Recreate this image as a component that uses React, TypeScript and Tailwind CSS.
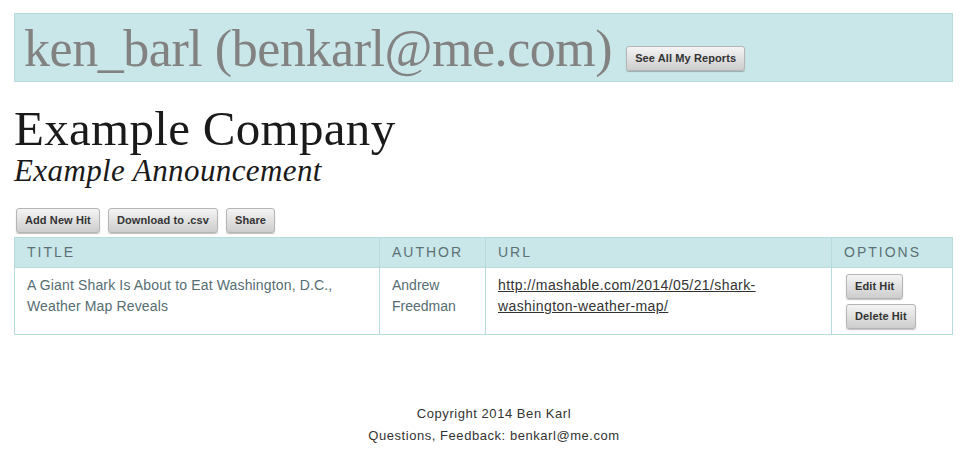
import React from "react";

const btn =
  "inline-flex items-center rounded-[3px] border border-[#b5b5b5] bg-gradient-to-b from-[#f4f4f4] to-[#cdcdcd] px-[8px] h-[25px] text-[11px] font-bold text-[#333] shadow-[0_1px_1px_rgba(0,0,0,0.25)] font-['Liberation_Sans',sans-serif] tracking-[0.1px]";

export default function App() {
  return (
    <div className="min-h-screen bg-white pl-[14px] pr-[19px] pt-[13px] font-['Liberation_Sans',Arial,sans-serif]">
      {/* user bar */}
      <div className="flex h-[69px] items-center border border-[#b8dcdd] bg-[#c9e7e9] pl-[9px]">
        <span className="font-['Liberation_Serif',serif] text-[52px] leading-none text-[#828282] tracking-[-0.45px] pt-[2px]">
          ken_barl (benkarl@me.com)
        </span>
        <button className={`${btn} ml-[14px] mt-[22px] px-[8px]`}>See All My Reports</button>
      </div>

      {/* company */}
      <h1 className="mt-[24px] font-['Liberation_Serif',serif] text-[49px] leading-[46px] text-[#1a1a1a] tracking-[0.3px]">
        Example Company
      </h1>
      <h2 className="mt-[2px] font-['Liberation_Serif',serif] italic text-[31px] leading-[34px] text-[#1a1a1a] tracking-[0.4px]">
        Example Announcement
      </h2>

      {/* actions */}
      <div className="mt-[20px] flex gap-[8px] pl-[2px]">
        <button className={btn}>Add New Hit</button>
        <button className={btn}>Download to .csv</button>
        <button className={btn}>Share</button>
      </div>

      {/* table */}
      <table className="mt-[4px] w-full border-collapse border border-[#b8dcdd] text-left">
        <thead>
          <tr className="h-[30px] bg-[#c9e7e9] text-[14px] tracking-[2px] text-[#5c7174]">
            <th className="w-[365px] border-r border-[#b8dcdd] px-[12px] font-normal">TITLE</th>
            <th className="w-[106px] border-r border-[#b8dcdd] px-[12px] font-normal">AUTHOR</th>
            <th className="w-[346px] border-r border-[#b8dcdd] px-[12px] font-normal">URL</th>
            <th className="px-[12px] font-normal">OPTIONS</th>
          </tr>
        </thead>
        <tbody>
          <tr className="h-[67px] border-t border-[#b8dcdd] align-top text-[14px] leading-[21px] text-[#566d72]">
            <td className="border-r border-[#b8dcdd] px-[12px] pt-[7px] tracking-[0.15px]">
              A Giant Shark Is About to Eat Washington, D.C., Weather Map Reveals
            </td>
            <td className="border-r border-[#b8dcdd] px-[12px] pt-[7px]">Andrew Freedman</td>
            <td className="border-r border-[#b8dcdd] px-[12px] pt-[7px] tracking-[0.4px]">
              <a className="text-[#333] underline">http://mashable.com/2014/05/21/shark-washington-weather-map/</a>
            </td>
            <td className="px-[14px] pt-[6px]">
              <div className="flex flex-col items-start gap-[5px]">
                <button className={`${btn} h-[24px]`}>Edit Hit</button>
                <button className={`${btn} h-[24px]`}>Delete Hit</button>
              </div>
            </td>
          </tr>
        </tbody>
      </table>

      {/* footer */}
      <footer className="mt-[68px] pl-[21px] text-center text-[13px] leading-[22px] text-[#333] tracking-[0.55px]">
        <div>Copyright 2014 Ben Karl</div>
        <div>Questions, Feedback: benkarl@me.com</div>
      </footer>
    </div>
  );
}
